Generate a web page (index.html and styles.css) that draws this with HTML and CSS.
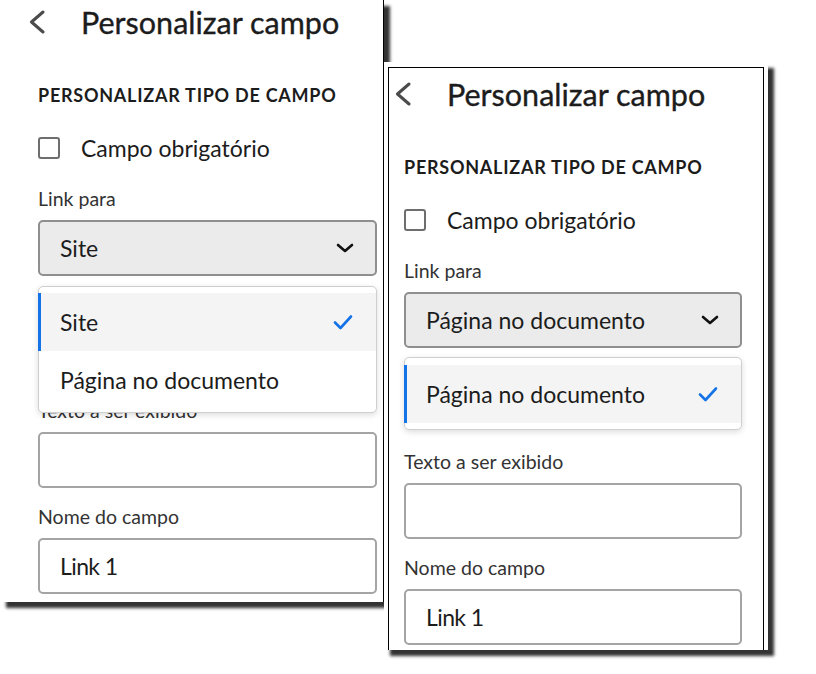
FILE: index.html
```html
<!DOCTYPE html>
<html lang="pt">
<head>
<meta charset="utf-8">
<link rel="stylesheet" href="styles.css">
</head>
<body>
<div class="canvas">

  <section class="panel panel-left">
    <div class="content">
      <div class="head">
        <svg class="back" viewBox="0 0 18 24" width="18" height="24"><path d="M15 2 L3.5 12 L15 22" fill="none" stroke="#4b4b4b" stroke-width="3" stroke-linecap="round" stroke-linejoin="round"/></svg>
        <h1 class="title">Personalizar campo</h1>
      </div>
      <h2 class="section">PERSONALIZAR TIPO DE CAMPO</h2>
      <label class="check-row"><span class="box"></span><span class="check-text">Campo obrigatório</span></label>

      <div class="field field-first">
        <div class="label">Link para</div>
        <div class="select">
          <span class="select-value">Site</span>
          <svg class="chev" viewBox="0 0 18 10" width="18" height="10"><path d="M2 2 L9 8 L16 2" fill="none" stroke="#111" stroke-width="2.6" stroke-linecap="round" stroke-linejoin="round"/></svg>
        </div>
        <div class="popover popover-over">
          <div class="item selected"><span>Site</span>
            <svg class="tick" viewBox="0 0 20 16" width="20" height="16"><path d="M2 8.5 L7.5 14 L18 2.5" fill="none" stroke="#1473e6" stroke-width="2.6" stroke-linecap="round" stroke-linejoin="round"/></svg>
          </div>
          <div class="item"><span>Página no documento</span></div>
        </div>
      </div>

      <div class="field ghost">
        <div class="label-space"></div>
        <div class="input"></div>
      </div>
      <div class="field">
        <div class="label">Texto a ser exibido</div>
        <div class="input"></div>
      </div>
      <div class="field">
        <div class="label">Nome do campo</div>
        <div class="input"><span class="input-value">Link 1</span></div>
      </div>
    </div>
  </section>

  <section class="frame">
    <div class="panel panel-right">
      <div class="content">
        <div class="head">
          <svg class="back" viewBox="0 0 18 24" width="18" height="24"><path d="M15 2 L3.5 12 L15 22" fill="none" stroke="#4b4b4b" stroke-width="3" stroke-linecap="round" stroke-linejoin="round"/></svg>
          <h1 class="title">Personalizar campo</h1>
        </div>
        <h2 class="section">PERSONALIZAR TIPO DE CAMPO</h2>
        <label class="check-row"><span class="box"></span><span class="check-text">Campo obrigatório</span></label>

        <div class="field field-first">
          <div class="label">Link para</div>
          <div class="select">
            <span class="select-value">Página no documento</span>
            <svg class="chev" viewBox="0 0 18 10" width="18" height="10"><path d="M2 2 L9 8 L16 2" fill="none" stroke="#111" stroke-width="2.6" stroke-linecap="round" stroke-linejoin="round"/></svg>
          </div>
          <div class="popover popover-inline">
            <div class="item selected"><span>Página no documento</span>
              <svg class="tick" viewBox="0 0 20 16" width="20" height="16"><path d="M2 8.5 L7.5 14 L18 2.5" fill="none" stroke="#1473e6" stroke-width="2.6" stroke-linecap="round" stroke-linejoin="round"/></svg>
            </div>
          </div>
        </div>

        <div class="field field-after-pop">
          <div class="label">Texto a ser exibido</div>
          <div class="input"></div>
        </div>
        <div class="field">
          <div class="label">Nome do campo</div>
          <div class="input"><span class="input-value">Link 1</span></div>
        </div>
      </div>
    </div>
  </section>

</div>
</body>
</html>
```

FILE: styles.css
```css
* { box-sizing: border-box; }
html, body { margin: 0; padding: 0; background: #fff; }
body {
  font-family: "Lato", "Noto Sans", sans-serif;
  color: #1c1c1c;
}
.canvas {
  position: relative;
  width: 816px;
  height: 674px;
  overflow: hidden;
}

/* Windows on the canvas */
.panel-left {
  position: absolute;
  left: 0;
  top: 0;
  width: 384px;
  height: 602px;
  background: #fff;
  border-right: 1px solid #000;
  box-shadow: 6px 6px 3px #333;
  overflow: hidden;
}
.panel-left .content { padding: 0 6px 0 38px; }

.frame {
  position: absolute;
  left: 384px;
  top: 62px;
  width: 384px;
  height: 588px;
  background: #fff;
  box-shadow: 6px 6px 3px #333;
  padding: 5px 4px 0 4px;
}
.panel-right {
  height: 100%;
  border: 1px solid #000;
  border-bottom: none;
  background: #fff;
  overflow: hidden;
}
.panel-right .content { padding: 4px 21px 0 15px; }

/* Header */
.head {
  height: 44px;
  display: flex;
  align-items: center;
  margin-left: -10px;
}
.back { flex: none; }
.title {
  margin: 0 0 0 35px;
  font-size: 30.5px;
  font-weight: 400;
  color: #1c1c1c;
  line-height: 44px;
  -webkit-text-stroke: 0.35px #1c1c1c;
}

.section {
  margin: 40px 0 0;
  font-size: 18px;
  font-weight: 700;
  letter-spacing: 0.75px;
  line-height: 22px;
  color: #1c1c1c;
}

.check-row {
  margin-top: 27px;
  height: 30px;
  display: flex;
  align-items: center;
}
.box {
  width: 22px;
  height: 22px;
  border: 2px solid #6e6e6e;
  border-radius: 3px;
  flex: none;
}
.check-text {
  margin-left: 21px;
  font-size: 23px;
  line-height: 30px;
}

.field { margin-top: 18px; position: relative; }
.field-first { margin-top: 25px; }
.field-after-pop { margin-top: 21px; }

.label {
  font-size: 19.5px;
  line-height: 22px;
  color: #333;
}
.label-space { height: 22px; }

.select {
  margin-top: 10px;
  height: 56px;
  background: #ebebeb;
  border: 2px solid #8f8f8f;
  border-radius: 5px;
  display: flex;
  align-items: center;
  justify-content: space-between;
  padding: 0 21px 0 20px;
}
.select-value { font-size: 23px; }

.input {
  margin-top: 10px;
  height: 56px;
  background: #fff;
  border: 2px solid #a4a4a4;
  border-radius: 5px;
  display: flex;
  align-items: center;
  padding: 0 20px;
}
.input-value { font-size: 23px; letter-spacing: -0.6px; }

.popover {
  background: #fff;
  border: 1px solid #cfcfcf;
  border-radius: 5px;
  box-shadow: 0 2px 6px rgba(0,0,0,0.14);
}
.popover-over {
  position: absolute;
  left: 0;
  right: 0;
  top: 98px;
  padding: 6px 0 3px;
  z-index: 2;
}
.popover-inline {
  margin-top: 9px;
  padding: 7px 0 6px;
}
.item {
  height: 58px;
  display: flex;
  align-items: center;
  justify-content: space-between;
  padding: 0 23px 0 21px;
  font-size: 23px;
  position: relative;
}
.item.selected { background: #f4f4f4; }
.item.selected::before {
  content: "";
  position: absolute;
  left: -1px;
  top: 0;
  bottom: 0;
  width: 3px;
  background: #1473e6;
}
.tick { flex: none; }
```
